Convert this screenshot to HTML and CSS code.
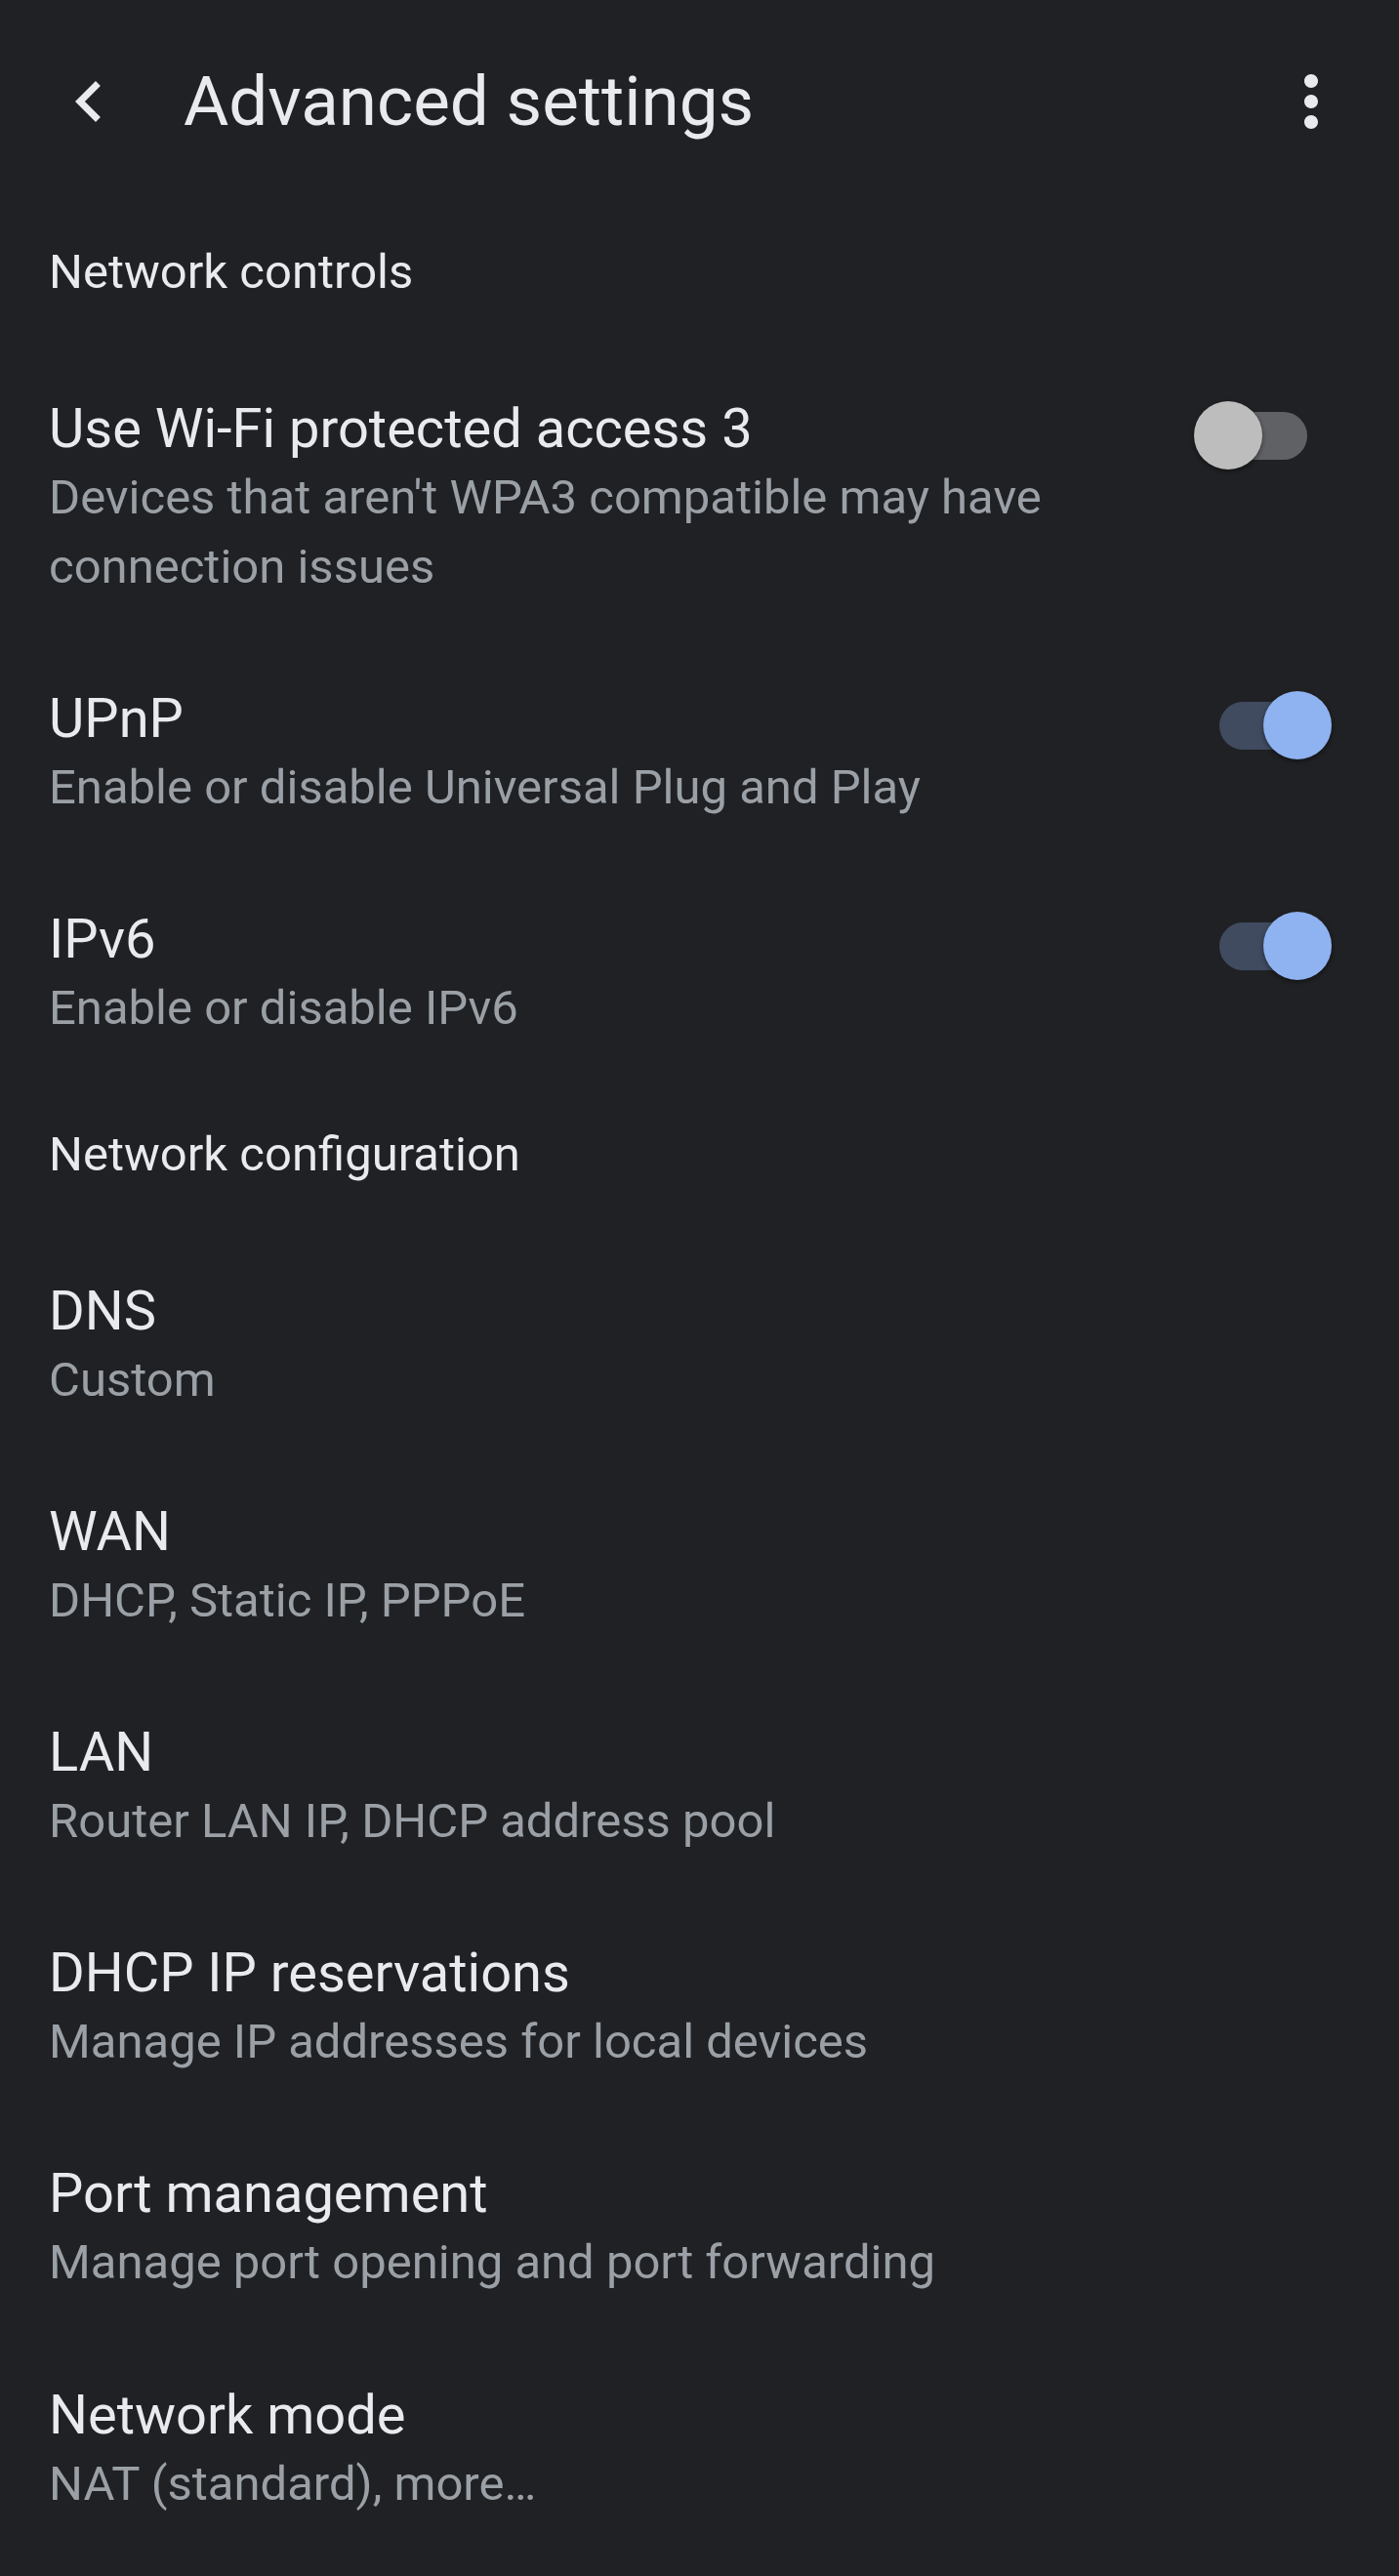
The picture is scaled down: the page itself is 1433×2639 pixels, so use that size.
FILE: index.html
```html
<!DOCTYPE html>
<html lang="en">
<head>
<meta charset="utf-8">
<title>Advanced settings</title>
<link rel="stylesheet" href="styles.css">
</head>
<body>
<div class="screen">
  <header class="appbar">
    <button class="icon-btn" aria-label="Back">
      <svg viewBox="0 0 24 24" width="84" height="84"><path fill="#e8eaed" d="M15.41 7.41L14 6l-6 6 6 6 1.41-1.41L10.83 12z"/></svg>
    </button>
    <h1 class="appbar-title">Advanced settings</h1>
    <button class="icon-btn more" aria-label="More options">
      <svg viewBox="0 0 24 24" width="84" height="84"><path fill="#e8eaed" d="M12 8c1.1 0 2-.9 2-2s-.9-2-2-2-2 .9-2 2 .9 2 2 2zm0 2c-1.1 0-2 .9-2 2s.9 2 2 2 2-.9 2-2-.9-2-2-2zm0 6c-1.1 0-2 .9-2 2s.9 2 2 2 2-.9 2-2-.9-2-2-2z"/></svg>
    </button>
  </header>

  <main class="list">
    <h2 class="section">Network controls</h2>

    <div class="row">
      <div class="text">
        <div class="title">Use Wi-Fi protected access 3</div>
        <div class="sub">Devices that aren't WPA3 compatible may have connection issues</div>
      </div>
      <div class="switch off" role="switch" aria-checked="false">
        <span class="track"></span>
        <span class="knob"></span>
      </div>
    </div>

    <div class="row">
      <div class="text">
        <div class="title">UPnP</div>
        <div class="sub">Enable or disable Universal Plug and Play</div>
      </div>
      <div class="switch on" role="switch" aria-checked="true">
        <span class="track"></span>
        <span class="knob"></span>
      </div>
    </div>

    <div class="row">
      <div class="text">
        <div class="title">IPv6</div>
        <div class="sub">Enable or disable IPv6</div>
      </div>
      <div class="switch on" role="switch" aria-checked="true">
        <span class="track"></span>
        <span class="knob"></span>
      </div>
    </div>

    <h2 class="section">Network configuration</h2>

    <div class="row">
      <div class="text">
        <div class="title">DNS</div>
        <div class="sub">Custom</div>
      </div>
    </div>

    <div class="row">
      <div class="text">
        <div class="title">WAN</div>
        <div class="sub">DHCP, Static IP, PPPoE</div>
      </div>
    </div>

    <div class="row">
      <div class="text">
        <div class="title">LAN</div>
        <div class="sub">Router LAN IP, DHCP address pool</div>
      </div>
    </div>

    <div class="row">
      <div class="text">
        <div class="title">DHCP IP reservations</div>
        <div class="sub">Manage IP addresses for local devices</div>
      </div>
    </div>

    <div class="row">
      <div class="text">
        <div class="title">Port management</div>
        <div class="sub">Manage port opening and port forwarding</div>
      </div>
    </div>

    <div class="row">
      <div class="text">
        <div class="title">Network mode</div>
        <div class="sub">NAT (standard), more…</div>
      </div>
    </div>
  </main>
</div>
</body>
</html>
```

FILE: styles.css
```css
html, body {
  margin: 0;
  padding: 0;
  background: #202124;
}

body {
  font-family: Roboto, "Noto Sans", "Liberation Sans", sans-serif;
  color: #e8eaed;
}

.screen {
  min-height: 2639px;
  background: #202124;
}

/* App bar */
.appbar {
  display: flex;
  align-items: center;
  height: 208px;
  padding: 0 48px 0 49px;
  box-sizing: border-box;
}

.icon-btn {
  display: flex;
  align-items: center;
  justify-content: center;
  width: 84px;
  height: 84px;
  padding: 0;
  border: 0;
  background: transparent;
  flex: none;
}

.icon-btn svg {
  display: block;
}

.appbar-title {
  margin: 0 0 0 55px;
  font-size: 71px;
  font-weight: 400;
  line-height: 84px;
  color: #e8eaed;
  white-space: nowrap;
}

.more {
  margin-left: auto;
}

/* List */
.list {
  display: flex;
  flex-direction: column;
}

.section {
  margin: 0;
  padding: 41px 50px 53px;
  font-size: 49px;
  font-weight: 400;
  line-height: 60px;
  color: #e8eaed;
}

.row {
  display: flex;
  align-items: flex-start;
  gap: 40px;
  padding: 43px 69px 43.2px 50px;
}

.text {
  flex: 1;
  min-width: 0;
}

.title {
  font-size: 56px;
  line-height: 69px;
  color: #e8eaed;
}

.sub {
  font-size: 49px;
  line-height: 71px;
  color: #9aa0a6;
}

/* Switch */
.switch {
  position: relative;
  flex: none;
  width: 141px;
  height: 70px;
  margin-top: 6px;
}

.track {
  position: absolute;
  left: 26px;
  top: 11px;
  width: 90px;
  height: 49px;
  border-radius: 25px;
}

.knob {
  position: absolute;
  top: 0;
  width: 70px;
  height: 70px;
  border-radius: 50%;
  box-shadow: 0 2px 5px rgba(0, 0, 0, 0.45);
}

.switch.off .track {
  background: #5f6164;
}

.switch.off .knob {
  left: 0;
  background: #bdbdbd;
}

.switch.on .track {
  background: #404b60;
}

.switch.on .knob {
  right: 0;
  background: #8fb2f1;
}
```
